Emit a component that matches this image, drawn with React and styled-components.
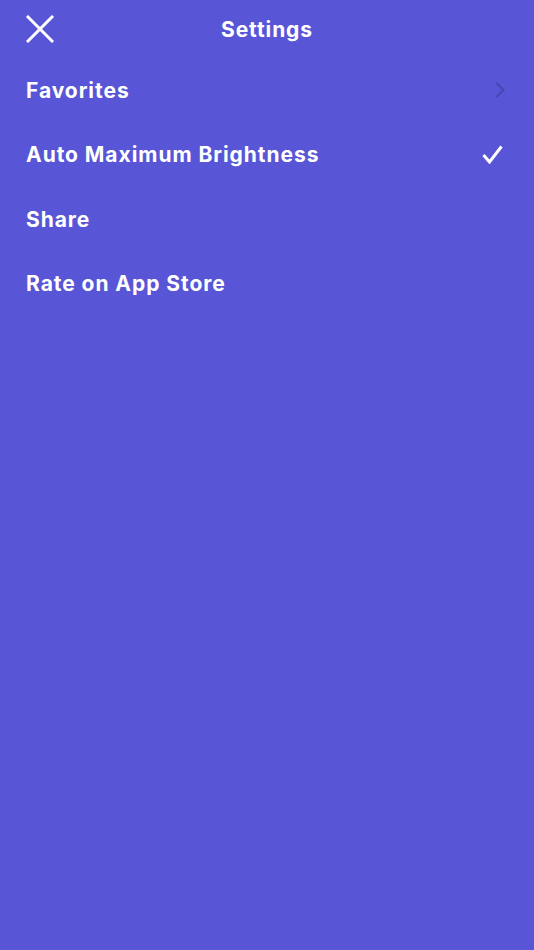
import styled, { createGlobalStyle } from "styled-components"

const GlobalStyle = createGlobalStyle`
  html, body {
    margin: 0;
    padding: 0;
    background: #5856d6;
  }
  body {
    font-family: Inter, "Open Sans", sans-serif;
    -webkit-font-smoothing: antialiased;
  }
`

const Screen = styled.div`
  width: 534px;
  height: 950px;
  background: #5856d6;
  color: #fff;
  overflow: hidden;
`

const Header = styled.div`
  height: 58px;
  display: grid;
  grid-template-columns: 80px 1fr 80px;
  align-items: center;
  padding: 0 26px;
  box-sizing: border-box;
`

const CloseButton = styled.button`
  width: 28px;
  height: 28px;
  padding: 0;
  border: none;
  background: transparent;
  display: flex;
  cursor: pointer;
`

const Title = styled.h1`
  margin: 0;
  text-align: center;
  font-size: 21px;
  font-weight: 700;
  letter-spacing: 0.9px;
`

const List = styled.div`
  display: flex;
  flex-direction: column;
`

const Row = styled.div`
  height: 64.5px;
  display: flex;
  align-items: center;
  justify-content: space-between;
  padding: 0 ${(p) => p.$right}px 0 26px;
  box-sizing: border-box;
`

const Label = styled.span`
  font-size: 21px;
  font-weight: 700;
  letter-spacing: 0.95px;
`

const Close = () => (
  <svg width="28" height="28" viewBox="0 0 28 28">
    <path d="M2 2 L26 26 M26 2 L2 26" stroke="#fff" strokeWidth="3" strokeLinecap="square" />
  </svg>
)

const Chevron = () => (
  <svg width="10" height="16" viewBox="0 0 10 16">
    <path d="M1.5 1 L8.5 8 L1.5 15" stroke="#4846b0" strokeWidth="2.2" fill="none" />
  </svg>
)

const Check = () => (
  <svg width="21" height="19" viewBox="0 0 21 19">
    <path d="M1.5 10 L7.5 17 L19.5 1.5" stroke="#fff" strokeWidth="3" fill="none" />
  </svg>
)

const items = [
  { label: "Favorites", icon: <Chevron />, right: 29 },
  { label: "Auto Maximum Brightness", icon: <Check />, right: 31 },
  { label: "Share" },
  { label: "Rate on App Store" },
]

const App = () => {
  return (
    <Screen>
      <GlobalStyle />
      <Header>
        <CloseButton>
          <Close />
        </CloseButton>
        <Title>Settings</Title>
        <span />
      </Header>
      <List>
        {items.map((item) => (
          <Row key={item.label} $right={item.right || 30}>
            <Label>{item.label}</Label>
            {item.icon}
          </Row>
        ))}
      </List>
    </Screen>
  )
}

export default App
